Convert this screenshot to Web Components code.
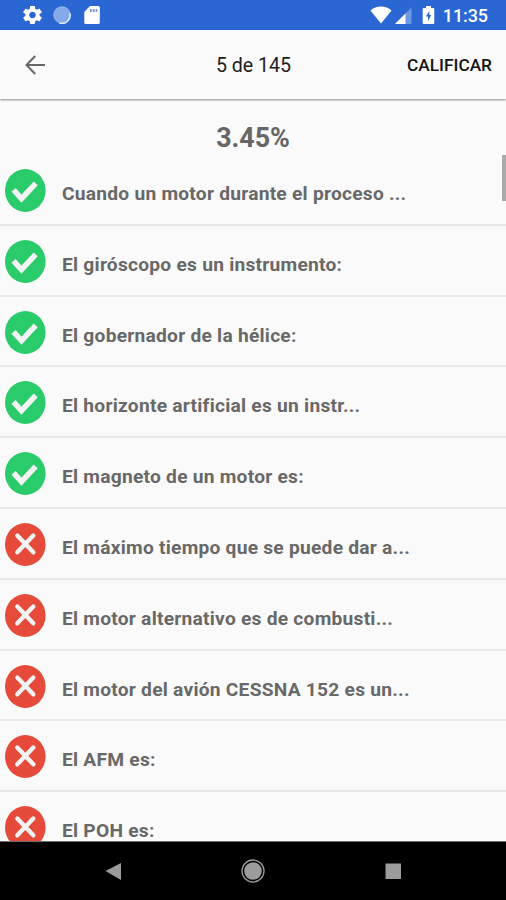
<!DOCTYPE html>
<html lang="es">
<head>
<meta charset="utf-8">
<title>Examen</title>
<style>
  body {
    background: #fafafa;
    font-family: Roboto, 'Liberation Sans', sans-serif;
    height: 900px;
    margin: 0;
    overflow: hidden;
    width: 506px;
  }
</style>
</head>
<body>
<quiz-app></quiz-app>

<script>
function attach( element, html ) {
  const template = document.createElement( 'template' );
  template.innerHTML = html;

  const shadowRoot = element.attachShadow( {mode: 'open'} );
  shadowRoot.appendChild( template.content.cloneNode( true ) );

  return shadowRoot;
}

class StatusBar extends HTMLElement {
  constructor() {
    super();

    attach( this, `
      <style>
        :host {
          align-items: flex-start;
          background: #2b67d3;
          box-sizing: border-box;
          color: #ffffff;
          display: flex;
          height: 30px;
          padding: 6px 18px 0 23px;
        }

        svg {
          display: block;
          flex: none;
          height: 18px;
        }

        .gear { width: 19px; }
        .sync { margin-left: 11px; width: 18px; }
        .card { margin-left: 13px; width: 16px; }
        .wifi { margin-left: auto; width: 22px; }
        .signal { margin-left: 3px; width: 17px; }
        .battery { margin-left: 10px; width: 13px; }

        p {
          font-size: 18px;
          font-weight: 500;
          height: 18px;
          letter-spacing: -0.1px;
          line-height: 20px;
          margin: 0 0 0 8px;
          white-space: nowrap;
        }
      </style>
      <svg class="gear" viewBox="2 2 20 20" preserveAspectRatio="none" fill="#fff"><path d="M19.43 12.98c.04-.32.07-.64.07-.98s-.03-.66-.07-.98l2.11-1.65c.19-.15.24-.42.12-.64l-2-3.46c-.12-.22-.39-.3-.61-.22l-2.49 1c-.52-.4-1.08-.73-1.69-.98l-.38-2.65C14.46 2.18 14.25 2 14 2h-4c-.25 0-.46.18-.49.42l-.38 2.65c-.61.25-1.17.59-1.69.98l-2.49-1c-.23-.09-.49 0-.61.22l-2 3.46c-.13.22-.07.49.12.64l2.11 1.65c-.04.32-.07.65-.07.98s.03.66.07.98l-2.11 1.65c-.19.15-.24.42-.12.64l2 3.46c.12.22.39.3.61.22l2.49-1c.52.4 1.08.73 1.69.98l.38 2.65c.03.24.24.42.49.42h4c.25 0 .46-.18.49-.42l.38-2.65c.61-.25 1.17-.59 1.69-.98l2.49 1c.23.09.49 0 .61-.22l2-3.46c.12-.22.07-.49-.12-.64l-2.11-1.65zM12 15.5c-1.93 0-3.5-1.57-3.5-3.5s1.57-3.5 3.5-3.5 3.5 1.57 3.5 3.5-1.57 3.5-3.5 3.5z"/></svg>
      <svg class="sync" viewBox="0 0 18 18"><circle cx="9" cy="9" r="8.2" fill="#84a8e8" stroke="#9dbaee"/><path d="M17 7.5A8.2 8.2 0 0 1 6.5 17" fill="none" stroke="#e2eafa" stroke-width="1.5"/></svg>
      <svg class="card" viewBox="0 0 16 18"><path d="M6 0h8.2A1.6 1.6 0 0 1 15.8 1.6v14.8a1.6 1.6 0 0 1-1.6 1.6H1.9A1.6 1.6 0 0 1 .3 16.400V6z" fill="#fff"/><path d="M6 3h1.800v3H6zM8.800 3h1.800v3H8.800zM11.600 3h1.800v3h-1.800z" fill="#7497df"/></svg>
      <svg class="wifi" viewBox="0 0 22 18"><path d="M.4 4.500C6-.9 16-.9 21.600 4.500L11 17.600z" fill="#fff"/></svg>
      <svg class="signal" viewBox="0 0 17 18"><path d="M16.500 1.500V18H0z" fill="#6f98e2"/><path d="M10.500 7.500V18H0z" fill="#fff"/></svg>
      <svg class="battery" viewBox="0 0 13 18"><path d="M4 0h5v2h2.200q1.100 0 1.100 1.100v13.800q0 1.100-1.100 1.100H1.800Q.7 18 .7 16.900V3.100Q.7 2 1.800 2H4z" fill="#fff"/><path d="M7.300 5L3.800 10.500h2.200v4.500L9.200 9H7.300z" fill="#2b67d3"/></svg>
      <p>11:35</p>
    ` );
  }
}

class ToolBar extends HTMLElement {
  constructor() {
    super();

    attach( this, `
      <style>
        :host {
          align-items: center;
          background: #fafafa;
          box-shadow: 0 1px 2px rgba( 0, 0, 0, 0.45 );
          box-sizing: border-box;
          color: #212121;
          display: grid;
          grid-template-columns: 1fr auto 1fr;
          height: 69px;
          padding: 0 14px 0 25px;
          position: relative;
          z-index: 1;
        }

        svg {
          display: block;
          height: 20px;
          width: 21px;
        }

        .title {
          font-size: 19.6px;
          line-height: 24px;
          padding: 3px 10px 0 0;
        }

        .action {
          color: #141414;
          font-size: 17.3px;
          font-weight: 500;
          justify-self: end;
          line-height: 24px;
        }
      </style>
      <svg viewBox="0 0 21 20"><path d="M20 10H2M10.200 1L1.500 10l8.700 9" fill="none" stroke="#686868" stroke-width="2"/></svg>
      <span class="title"><slot></slot></span>
      <span class="action"><slot name="action"></slot></span>
    ` );
  }
}

class ResultIcon extends HTMLElement {
  constructor() {
    super();

    this.$root = attach( this, `
      <style>
        :host {
          display: block;
          flex: none;
          height: 43px;
          width: 41px;
        }

        svg {
          display: block;
          height: 43px;
          width: 41px;
        }
      </style>
      <svg viewBox="0 0 41 43">
        <ellipse cx="20.300" cy="21.500" rx="20.300" ry="21.400"></ellipse>
        <path fill="none" stroke="#f3f3f3"></path>
      </svg>
    ` );
  }

  static get observedAttributes() {
    return ['correct'];
  }

  connectedCallback() {
    this.render();
  }

  attributeChangedCallback() {
    this.render();
  }

  render() {
    const correct = this.hasAttribute( 'correct' );
    const mark = this.$root.querySelector( 'path' );

    this.$root.querySelector( 'ellipse' ).setAttribute( 'fill', correct ? '#2acb6b' : '#e64a3a' );
    mark.setAttribute( 'd', correct ? 'M8.500 20.800l8 8.800L30.700 14.300' : 'M12.300 12.500l16 16.800M28.300 12.500l-16 16.800' );
    mark.setAttribute( 'stroke-width', correct ? 5.5 : 4.4 );
    mark.setAttribute( 'stroke-linecap', correct ? 'butt' : 'round' );
  }
}

class QuestionRow extends HTMLElement {
  constructor() {
    super();

    attach( this, `
      <style>
        :host {
          border-bottom: 2px solid #e8e8e8;
          box-sizing: border-box;
          display: flex;
          flex: none;
          gap: 16px;
          height: 70.8px;
          padding: 14px 12px 0 5px;
        }

        p {
          color: #686868;
          font-size: 19.2px;
          font-weight: 700;
          letter-spacing: 0.24px;
          line-height: 20px;
          margin: 15px 0 0 0;
          white-space: nowrap;
        }
      </style>
      <slot name="icon"></slot>
      <p><slot></slot></p>
    ` );
  }
}

class NavigationBar extends HTMLElement {
  constructor() {
    super();

    attach( this, `
      <style>
        :host {
          align-items: center;
          background: #000000;
          border-top: 1px solid #6b6f6e;
          box-sizing: border-box;
          display: grid;
          grid-template-columns: repeat( 3, 140px );
          height: 59px;
          justify-content: center;
          justify-items: center;
        }

        svg {
          display: block;
          height: 24px;
          width: 24px;
        }
      </style>
      <svg viewBox="0 0 24 24"><path d="M4.500 12L20 4v17z" fill="#9c9c9c"/></svg>
      <svg viewBox="0 0 24 24"><circle cx="12" cy="12" r="11" fill="none" stroke="#9c9c9c" stroke-width="1.300"/><circle cx="12" cy="12" r="8.800" fill="#9c9c9c"/></svg>
      <svg viewBox="0 0 24 24"><path d="M4.500 4.500h15.500v15.500H4.500z" fill="#9c9c9c"/></svg>
    ` );
  }
}

class QuizApp extends HTMLElement {
  constructor() {
    super();

    const shadowRoot = attach( this, `
      <style>
        :host {
          display: flex;
          flex-direction: column;
          height: 900px;
          width: 506px;
        }

        main {
          flex: 1;
          min-height: 0;
          overflow: hidden;
          position: relative;
        }

        h1 {
          color: #666666;
          font-size: 26.8px;
          font-weight: 700;
          height: 56px;
          line-height: 79px;
          margin: 0;
          text-align: center;
        }

        .list {
          display: flex;
          flex-direction: column;
        }

        .thumb {
          background: #aaaaaa;
          height: 46px;
          position: absolute;
          right: 0;
          top: 56px;
          width: 4px;
        }
      </style>
      <status-bar></status-bar>
      <tool-bar>5 de 145<span slot="action">CALIFICAR</span></tool-bar>
      <main>
        <h1>3.45%</h1>
        <div class="list"></div>
        <div class="thumb"></div>
      </main>
      <navigation-bar></navigation-bar>
    ` );

    this.$list = shadowRoot.querySelector( '.list' );
  }

  set data( value ) {
    this.$list.replaceChildren();

    for( let d = 0; d < value.length; d++ ) {
      const row = document.createElement( 'question-row' );
      const icon = document.createElement( 'result-icon' );

      icon.slot = 'icon';
      icon.toggleAttribute( 'correct', value[d].correct );
      row.append( icon, value[d].text );

      this.$list.appendChild( row );
    }
  }
}

window.customElements.define( 'status-bar', StatusBar );
window.customElements.define( 'tool-bar', ToolBar );
window.customElements.define( 'result-icon', ResultIcon );
window.customElements.define( 'question-row', QuestionRow );
window.customElements.define( 'navigation-bar', NavigationBar );
window.customElements.define( 'quiz-app', QuizApp );

document.querySelector( 'quiz-app' ).data = [
  {text: 'Cuando un motor durante el proceso ...', correct: true},
  {text: 'El giróscopo es un instrumento:', correct: true},
  {text: 'El gobernador de la hélice:', correct: true},
  {text: 'El horizonte artificial es un instr...', correct: true},
  {text: 'El magneto de un motor es:', correct: true},
  {text: 'El máximo tiempo que se puede dar a...', correct: false},
  {text: 'El motor alternativo es de combusti...', correct: false},
  {text: 'El motor del avión CESSNA 152 es un...', correct: false},
  {text: 'El AFM es:', correct: false},
  {text: 'El POH es:', correct: false}
];
</script>
</body>
</html>
